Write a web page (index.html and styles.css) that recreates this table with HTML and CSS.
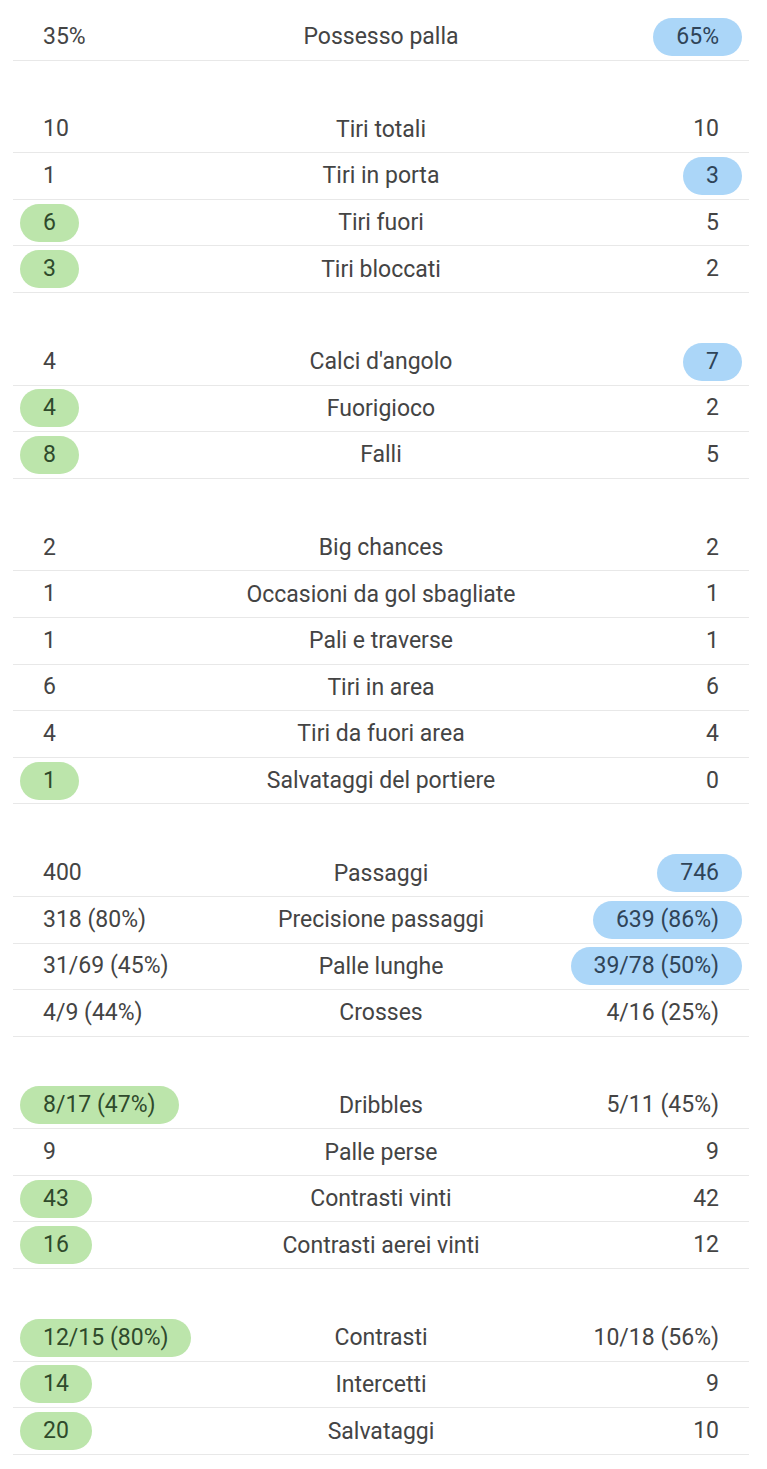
FILE: index.html
```html
<!DOCTYPE html>
<html lang="it">
<head>
<meta charset="utf-8">
<title>Statistiche</title>
<link rel="stylesheet" href="styles.css">
</head>
<body>
<div class="stats">
  <section class="group">
    <div class="row"><div class="l"><span class="v">35%</span></div><div class="c">Possesso palla</div><div class="r"><span class="v blue">65%</span></div></div>
  </section>
  <section class="group">
    <div class="row"><div class="l"><span class="v">10</span></div><div class="c">Tiri totali</div><div class="r"><span class="v">10</span></div></div>
    <div class="row"><div class="l"><span class="v">1</span></div><div class="c">Tiri in porta</div><div class="r"><span class="v blue">3</span></div></div>
    <div class="row"><div class="l"><span class="v green">6</span></div><div class="c">Tiri fuori</div><div class="r"><span class="v">5</span></div></div>
    <div class="row"><div class="l"><span class="v green">3</span></div><div class="c">Tiri bloccati</div><div class="r"><span class="v">2</span></div></div>
  </section>
  <section class="group">
    <div class="row"><div class="l"><span class="v">4</span></div><div class="c">Calci d'angolo</div><div class="r"><span class="v blue">7</span></div></div>
    <div class="row"><div class="l"><span class="v green">4</span></div><div class="c">Fuorigioco</div><div class="r"><span class="v">2</span></div></div>
    <div class="row"><div class="l"><span class="v green">8</span></div><div class="c">Falli</div><div class="r"><span class="v">5</span></div></div>
  </section>
  <section class="group">
    <div class="row"><div class="l"><span class="v">2</span></div><div class="c">Big chances</div><div class="r"><span class="v">2</span></div></div>
    <div class="row"><div class="l"><span class="v">1</span></div><div class="c">Occasioni da gol sbagliate</div><div class="r"><span class="v">1</span></div></div>
    <div class="row"><div class="l"><span class="v">1</span></div><div class="c">Pali e traverse</div><div class="r"><span class="v">1</span></div></div>
    <div class="row"><div class="l"><span class="v">6</span></div><div class="c">Tiri in area</div><div class="r"><span class="v">6</span></div></div>
    <div class="row"><div class="l"><span class="v">4</span></div><div class="c">Tiri da fuori area</div><div class="r"><span class="v">4</span></div></div>
    <div class="row"><div class="l"><span class="v green">1</span></div><div class="c">Salvataggi del portiere</div><div class="r"><span class="v">0</span></div></div>
  </section>
  <section class="group">
    <div class="row"><div class="l"><span class="v">400</span></div><div class="c">Passaggi</div><div class="r"><span class="v blue">746</span></div></div>
    <div class="row"><div class="l"><span class="v">318 (80%)</span></div><div class="c">Precisione passaggi</div><div class="r"><span class="v blue">639 (86%)</span></div></div>
    <div class="row"><div class="l"><span class="v">31/69 (45%)</span></div><div class="c">Palle lunghe</div><div class="r"><span class="v blue">39/78 (50%)</span></div></div>
    <div class="row"><div class="l"><span class="v">4/9 (44%)</span></div><div class="c">Crosses</div><div class="r"><span class="v">4/16 (25%)</span></div></div>
  </section>
  <section class="group">
    <div class="row"><div class="l"><span class="v green">8/17 (47%)</span></div><div class="c">Dribbles</div><div class="r"><span class="v">5/11 (45%)</span></div></div>
    <div class="row"><div class="l"><span class="v">9</span></div><div class="c">Palle perse</div><div class="r"><span class="v">9</span></div></div>
    <div class="row"><div class="l"><span class="v green">43</span></div><div class="c">Contrasti vinti</div><div class="r"><span class="v">42</span></div></div>
    <div class="row"><div class="l"><span class="v green">16</span></div><div class="c">Contrasti aerei vinti</div><div class="r"><span class="v">12</span></div></div>
  </section>
  <section class="group">
    <div class="row"><div class="l"><span class="v green">12/15 (80%)</span></div><div class="c">Contrasti</div><div class="r"><span class="v">10/18 (56%)</span></div></div>
    <div class="row"><div class="l"><span class="v green">14</span></div><div class="c">Intercetti</div><div class="r"><span class="v">9</span></div></div>
    <div class="row"><div class="l"><span class="v green">20</span></div><div class="c">Salvataggi</div><div class="r"><span class="v">10</span></div></div>
  </section>
</div>
</body>
</html>
```
FILE: styles.css
```css
html, body {
  margin: 0;
  padding: 0;
  background: #ffffff;
}
body {
  font-family: Roboto, "Liberation Sans", Arial, sans-serif;
  font-size: 23px;
  color: #444444;
}
.stats {
  display: flex;
  flex-direction: column;
  gap: 46px;
  padding: 14px 18px 0 13px;
}
.group {
  display: flex;
  flex-direction: column;
}
.row {
  display: grid;
  grid-template-columns: 1fr auto 1fr;
  align-items: center;
  height: 46.6px;
  box-sizing: border-box;
  border-bottom: 1px solid #e8e8e8;
}
.l {
  display: flex;
  justify-content: flex-start;
  padding-left: 7px;
}
.r {
  display: flex;
  justify-content: flex-end;
  padding-right: 7px;
}
.c {
  text-align: center;
  white-space: nowrap;
}
.v {
  display: inline-block;
  height: 38px;
  line-height: 38px;
  padding: 0 23px;
  border-radius: 19px;
  white-space: nowrap;
}
.green {
  background: #bce5ab;
  color: #2f4a2c;
}
.blue {
  background: #abd6f8;
  color: #2f4458;
}
```
